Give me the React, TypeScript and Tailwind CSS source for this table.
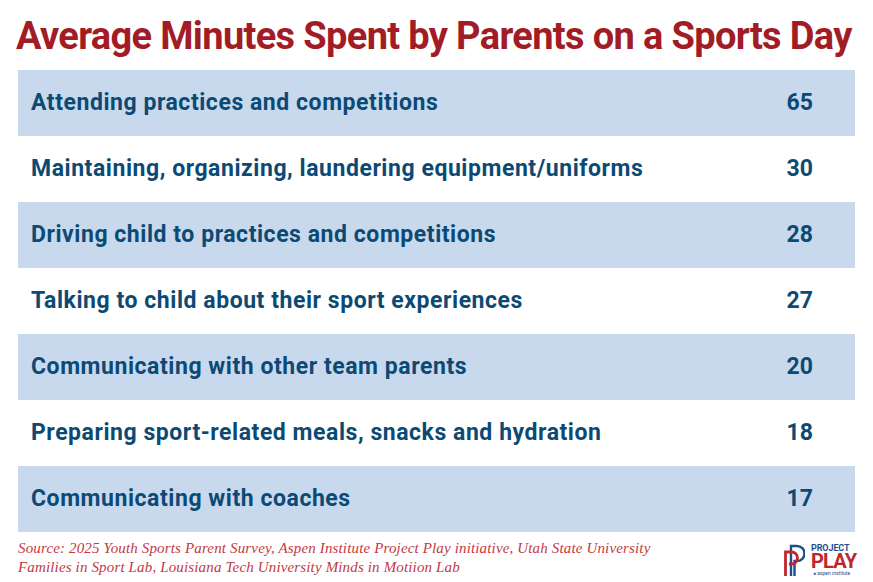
const rows: [string, number][] = [
  ["Attending practices and competitions", 65],
  ["Maintaining, organizing, laundering equipment/uniforms", 30],
  ["Driving child to practices and competitions", 28],
  ["Talking to child about their sport experiences", 27],
  ["Communicating with other team parents", 20],
  ["Preparing sport-related meals, snacks and hydration", 18],
  ["Communicating with coaches", 17],
];

function ProjectPlayLogo() {
  return (
    <div className="flex items-start gap-[6px]">
      <svg width="22" height="33" viewBox="0 0 22 33" fill="none">
        <path d="M8 32V2H14A7.5 7.5 0 0 1 14 17H11.5V32" stroke="#1f4e8c" strokeWidth="2.4" />
        <path d="M2.5 32V8H8.5A6 6 0 0 1 8.5 20H6" stroke="#c0272d" strokeWidth="2.8" />
      </svg>
      <div className="flex flex-col w-[44px]" style={{ fontFamily: "Roboto, sans-serif" }}>
        <span className="h-[9px] text-[9px] leading-[9px] font-bold text-[#1f4e8c] tracking-[-0.1px]">PROJECT</span>
        <span className="h-[17px] text-[20px] leading-[17px] font-bold text-[#c0272d] tracking-[-0.8px]">PLAY</span>
        <span className="h-[6px] text-[5px] leading-[6px] text-[#1f4e8c] pl-[2px]">● aspen institute</span>
      </div>
    </div>
  );
}

export default function App() {
  return (
    <div className="w-[873px] h-[582px] bg-white overflow-hidden">
      <h1
        className="h-[70px] pl-[16px] pt-[14px] text-[38px] leading-[44px] font-bold text-[#a21c26] whitespace-nowrap tracking-[-0.65px]"
        style={{ fontFamily: "Roboto, sans-serif" }}
      >
        Average Minutes Spent by Parents on a Sports Day
      </h1>

      <div className="mx-[18px] w-[837px]">
        {rows.map(([label, value], i) => (
          <div
            key={label}
            className={`h-[66px] flex items-center justify-between pl-[13px] pr-[42px] text-[23px] font-bold text-[#0c4a74] tracking-[0.55px] ${
              i % 2 === 0 ? "bg-[#c8d9ee]" : "bg-white"
            }`}
            style={{ fontFamily: "Roboto, sans-serif" }}
          >
            <span>{label}</span>
            <span className="tracking-normal">{value}</span>
          </div>
        ))}
      </div>

      <div className="flex items-start justify-between pl-[18px] pr-[18px] pt-[7px]">
        <p
          className="text-[15px] leading-[19px] italic text-[#c4393f] tracking-[0.15px]"
          style={{ fontFamily: '"Liberation Serif", serif' }}
        >
          Source: 2025 Youth Sports Parent Survey, Aspen Institute Project Play initiative, Utah State University
          <br />
          Families in Sport Lab, Louisiana Tech University Minds in Motiion Lab
        </p>
        <div className="pt-[5px]">
          <ProjectPlayLogo />
        </div>
      </div>
    </div>
  );
}
